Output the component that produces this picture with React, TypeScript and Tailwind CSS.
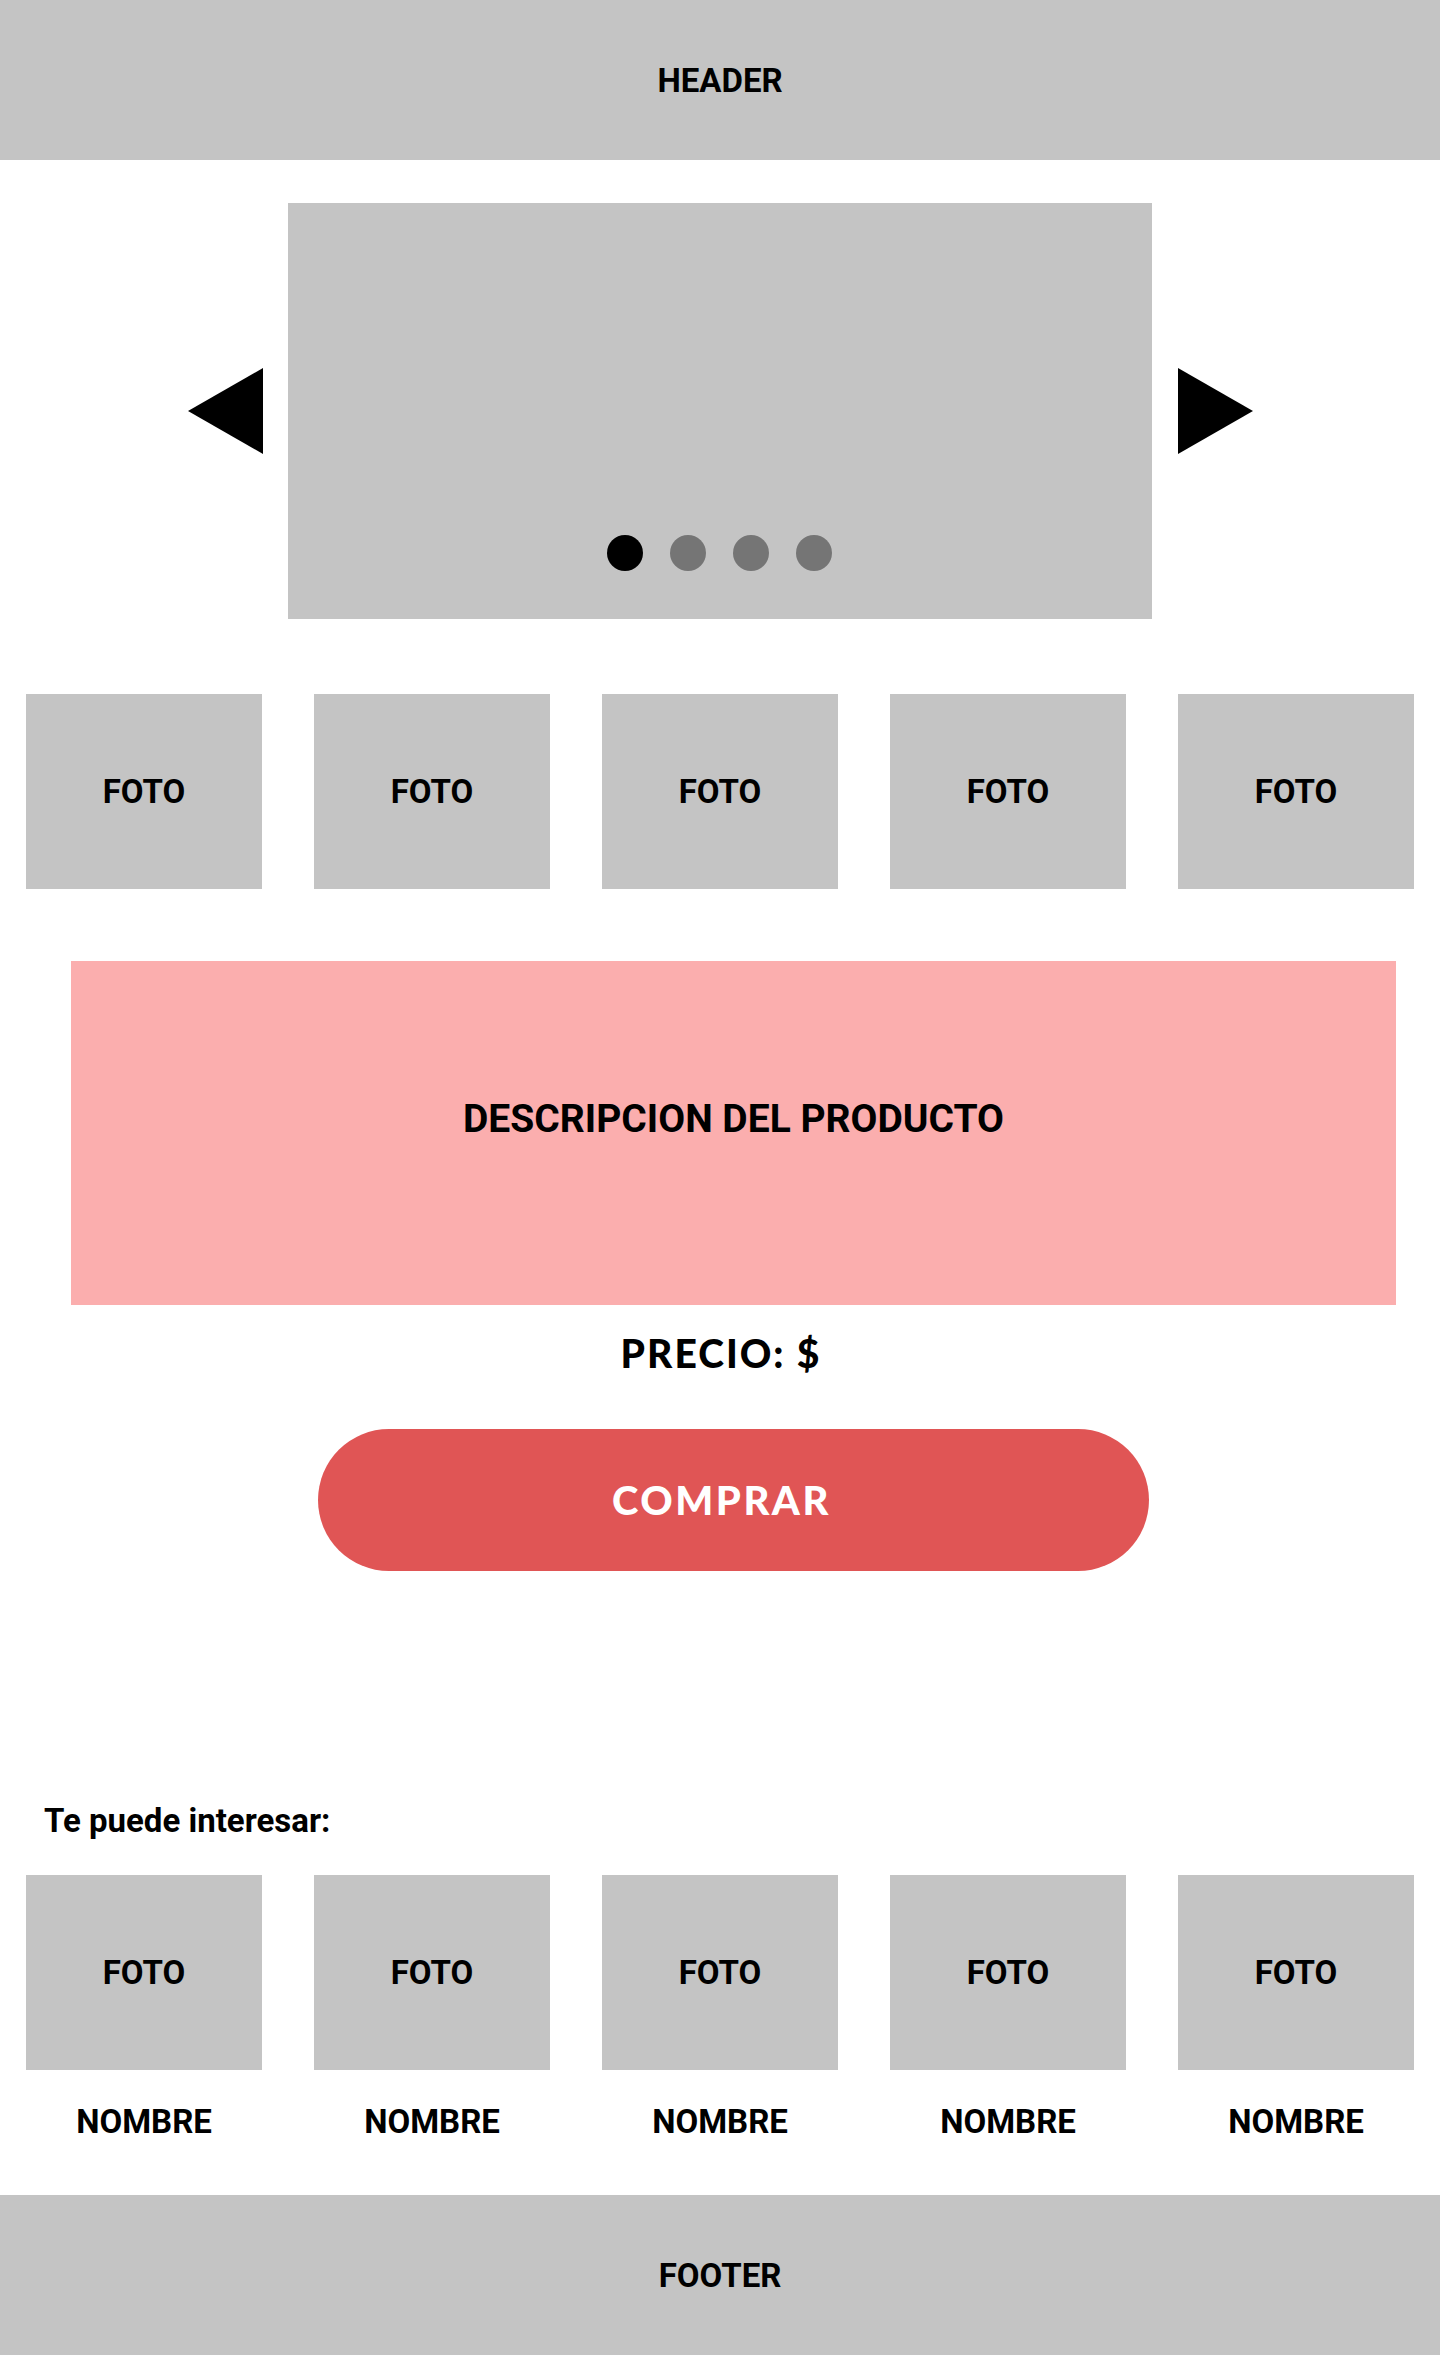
const roboto = { fontFamily: "Roboto, 'Liberation Sans', sans-serif" }
const lato = { fontFamily: "Lato, 'Open Sans', sans-serif" }

function Foto() {
  return (
    <div className="w-[236px] h-[195px] bg-[#c4c4c4] flex items-center justify-center text-[33px] font-bold leading-none text-black">
      FOTO
    </div>
  )
}

export default function App() {
  const items = [0, 1, 2, 3, 4]
  return (
    <div className="w-[1440px] min-h-[2355px] bg-white flex flex-col" style={roboto}>
      <header className="h-[160px] bg-[#c4c4c4] flex items-center justify-center text-[33px] font-bold leading-none text-black">
        HEADER
      </header>

      <div className="mt-[43px] flex items-center justify-center gap-[25px]">
        <svg width="75" height="86" viewBox="0 0 75 86">
          <polygon points="75,0 75,86 0,43" fill="#000" />
        </svg>
        <div className="w-[864px] h-[416px] bg-[#c4c4c4] flex items-end justify-center pb-[48px]">
          <div className="flex gap-[27px]">
            <span className="w-[36px] h-[36px] rounded-full bg-black" />
            <span className="w-[36px] h-[36px] rounded-full bg-[#757575]" />
            <span className="w-[36px] h-[36px] rounded-full bg-[#757575]" />
            <span className="w-[36px] h-[36px] rounded-full bg-[#757575]" />
          </div>
        </div>
        <svg width="75" height="86" viewBox="0 0 75 86" className="ml-px">
          <polygon points="0,0 0,86 75,43" fill="#000" />
        </svg>
      </div>

      <div className="mt-[75px] px-[26px] flex justify-between">
        {items.map((i) => (
          <Foto key={i} />
        ))}
      </div>

      <div className="mt-[72px] ml-[71px] w-[1325px] h-[344px] bg-[#fbaeae] flex items-center justify-center pb-[28px] text-[39px] font-bold leading-none text-black">
        DESCRIPCION DEL PRODUCTO
      </div>

      <div className="mt-[24px] h-[48px] flex items-center justify-center pl-[2px] text-[39px] font-black leading-none tracking-[2px] text-black" style={lato}>
        PRECIO: $
      </div>

      <button className="mt-[52px] ml-[318px] w-[831px] h-[142px] rounded-full bg-[#e05555] flex items-center justify-center pr-[24px] text-[40px] font-black leading-none tracking-[2.5px] text-white" style={lato}>
        COMPRAR
      </button>

      <div className="mt-[229px] h-[40px] pl-[44px] flex items-center text-[33px] font-bold leading-none text-black">
        Te puede interesar:
      </div>

      <div className="mt-[35px] px-[26px] flex justify-between">
        {items.map((i) => (
          <div key={i} className="flex flex-col items-center">
            <Foto />
            <div className="mt-[31px] h-[40px] flex items-center text-[33px] font-bold leading-none text-black">NOMBRE</div>
          </div>
        ))}
      </div>

      <footer className="mt-[54px] h-[160px] bg-[#c4c4c4] flex items-center justify-center text-[33px] font-bold leading-none text-black">
        FOOTER
      </footer>
    </div>
  )
}
